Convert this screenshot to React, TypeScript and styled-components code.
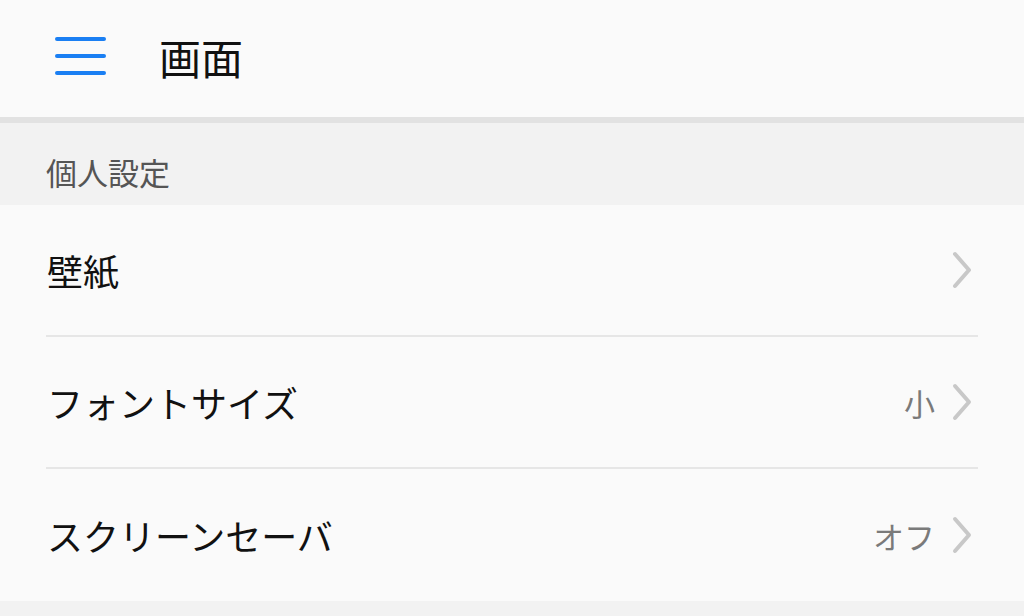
import styled, { createGlobalStyle } from 'styled-components'

const GlobalStyle = createGlobalStyle`
  html, body {
    margin: 0;
    padding: 0;
    background: #f2f2f2;
    font-family: 'Noto Sans CJK JP', 'Noto Sans', sans-serif;
  }
`

const StyledScreen = styled.div`
  width: 1024px;
  height: 616px;
  overflow: hidden;
  background: #f2f2f2;
  display: flex;
  flex-direction: column;
`

const StyledHeader = styled.header`
  height: 117px;
  display: flex;
  align-items: center;
  background: #fafafa;
  border-bottom: 6px solid #e2e2e2;
  box-sizing: content-box;
  padding-left: 55px;
`

const StyledMenuButton = styled.button`
  background: none;
  border: none;
  padding: 0;
  width: 51px;
  height: 38px;
  display: flex;
  flex-direction: column;
  justify-content: space-between;
  margin-right: 53px;
  margin-top: -6px;

  span {
    display: block;
    height: 4px;
    border-radius: 2px;
    background: #1a7ff3;
  }
`

const StyledTitle = styled.h1`
  margin: 0 0 4px;
  font-size: 42px;
  font-weight: 400;
  color: #111;
`

const StyledSectionHeading = styled.div`
  height: 82px;
  display: flex;
  align-items: center;
  padding: 0 46px;
  padding-top: 14px;
  box-sizing: border-box;
  font-size: 31px;
  color: #555;
`

const StyledList = styled.ul`
  list-style: none;
  margin: 0;
  padding: 0 46px;
  background: #fafafa;
`

const StyledRow = styled.li<{ $last?: boolean }>`
  height: 132px;
  box-sizing: border-box;
  display: flex;
  align-items: center;
  border-bottom: ${({ $last }) => ($last ? 'none' : '2px solid #e6e6e6')};
`

const StyledLabel = styled.span`
  flex: 1;
  font-size: 36px;
  color: #111;
  padding-left: 1px;
`

const StyledValue = styled.span`
  font-size: 31px;
  color: #7a7a7a;
  margin-right: 15px;
`

const StyledChevron = styled.svg`
  width: 24px;
  height: 38px;
  margin-right: 4px;
`

const Chevron = () => (
  <StyledChevron viewBox="0 0 24 38">
    <path
      d="M5 3 L19 19 L5 35"
      fill="none"
      stroke="#c8c8c8"
      strokeWidth="4"
      strokeLinecap="round"
      strokeLinejoin="round"
    />
  </StyledChevron>
)

const rows = [
  { label: '壁紙' },
  { label: 'フォントサイズ', value: '小' },
  { label: 'スクリーンセーバ', value: 'オフ' }
]

export default function App() {
  return (
    <>
      <GlobalStyle />
      <StyledScreen>
        <StyledHeader>
          <StyledMenuButton aria-label="menu">
            <span />
            <span />
            <span />
          </StyledMenuButton>
          <StyledTitle>画面</StyledTitle>
        </StyledHeader>
        <StyledSectionHeading>個人設定</StyledSectionHeading>
        <StyledList>
          {rows.map((row, i) => (
            <StyledRow key={row.label} $last={i === rows.length - 1}>
              <StyledLabel>{row.label}</StyledLabel>
              {row.value && <StyledValue>{row.value}</StyledValue>}
              <Chevron />
            </StyledRow>
          ))}
        </StyledList>
      </StyledScreen>
    </>
  )
}
